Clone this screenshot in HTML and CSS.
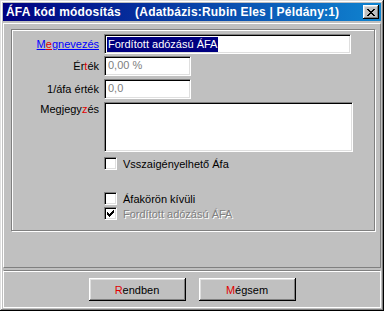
FILE: index.html
```html
<!DOCTYPE html>
<html lang="hu">
<head>
    <meta charset="UTF-8">
    <title>ÁFA kód módosítás</title>
    <link rel="stylesheet" href="styles.css">
</head>
<body>
    <div class="window">
        <div class="titlebar">
            <span class="title">ÁFA kód módosítás    (Adatbázis:Rubin Eles | Példány:1)</span>
            <div class="close-btn">
                <svg width="8" height="7" viewBox="0 0 8 7" shape-rendering="crispEdges"><path d="M0 0h2v1h-2z M6 0h2v1h-2z M1 1h2v1h-2z M5 1h2v1h-2z M2 2h4v1h-4z M3 3h2v1h-2z M2 4h4v1h-4z M1 5h2v1h-2z M5 5h2v1h-2z M0 6h2v1h-2z M6 6h2v1h-2z" fill="#000"/></svg>
            </div>
        </div>
        <div class="main">
            <div class="group">
                <div class="row row-name">
                    <a class="label link">M<u class="key">e</u>gnevezés</a>
                    <div class="field field-wide"><span class="sel">Fordított adózású ÁFA</span></div>
                </div>
                <div class="row row-value">
                    <span class="label">Ér<span class="key">t</span>ék</span>
                    <div class="field field-short"><span class="grey">0,00 %</span></div>
                </div>
                <div class="row row-inverse">
                    <span class="label">1/áfa érték</span>
                    <div class="field field-short"><span class="grey">0,0</span></div>
                </div>
                <div class="row row-note">
                    <span class="label label-top">Megjegy<span class="key">z</span>és</span>
                    <div class="field field-area"></div>
                </div>
                <div class="checks">
                    <label class="check check-first"><span class="box"></span>Vsszaigényelhető Áfa</label>
                    <label class="check check-second"><span class="box"></span>Áfakörön kívüli</label>
                    <label class="check disabled"><span class="box">
                        <svg width="7" height="7" viewBox="0 0 7 7" shape-rendering="crispEdges"><path d="M6 0h1v1h-1z M5 1h2v1h-2z M0 2h1v1h-1z M4 2h3v1h-3z M0 3h2v1h-2z M3 3h3v1h-3z M0 4h5v1h-5z M1 5h3v1h-3z M2 6h1v1h-1z" fill="#000"/></svg>
                    </span>Fordított adózású ÁFA</label>
                </div>
            </div>
        </div>
        <div class="footer">
            <button class="btn"><span class="key">R</span>endben</button>
            <button class="btn"><span class="key">M</span>égsem</button>
        </div>
    </div>
</body>
</html>
```

FILE: styles.css
```css
body {
    margin: 0;
    font-family: "Liberation Sans", Arial, sans-serif;
    font-size: 11px;
    color: #000;
    background: #c0c0c0;
}
.window {
    width: 384px;
    height: 311px;
    box-sizing: border-box;
    padding: 3px;
    background: #c0c0c0;
    box-shadow: inset -1px -1px 0 #000, inset 1px 1px 0 #dfdfdf,
                inset -2px -2px 0 #808080, inset 2px 2px 0 #fff;
    display: flex;
    flex-direction: column;
}
.titlebar {
    height: 18px;
    flex-shrink: 0;
    display: flex;
    align-items: center;
    justify-content: space-between;
    padding: 0 2px 0 3px;
    background: linear-gradient(to right, #000080, #1084d0);
}
.title {
    color: #fff;
    font-family: "Liberation Sans", Arial, sans-serif;
    font-weight: bold;
    font-size: 12px;
    letter-spacing: 0.2px;
    white-space: pre;
}
.close-btn {
    width: 16px;
    height: 14px;
    box-sizing: border-box;
    background: #c0c0c0;
    box-shadow: inset -1px -1px 0 #000, inset 1px 1px 0 #fff,
                inset -2px -2px 0 #808080, inset 2px 2px 0 #dfdfdf;
    display: flex;
    align-items: center;
    justify-content: center;
}
.main {
    margin-top: 2px;
    height: 245px;
    box-sizing: border-box;
    border-top: 1px solid #fff;
    border-left: 1px solid #fff;
    border-right: 1px solid #808080;
    border-bottom: 1px solid #808080;
    padding: 5px 5px 0 7px;
}
.group {
    height: 202px;
    box-sizing: border-box;
    border: 1px solid #808080;
    box-shadow: 1px 1px 0 #fff, inset 1px 1px 0 #fff;
    padding: 4px 0 0 1px;
}
.row {
    display: flex;
    align-items: center;
}
.label {
    width: 86px;
    text-align: right;
    padding-right: 5px;
    flex-shrink: 0;
}
.label-top {
    align-self: flex-start;
    padding-top: 1px;
}
.link {
    color: #0000ff;
    text-decoration: underline;
}
.key {
    color: #e00000;
    text-decoration: inherit;
}
.field {
    height: 20px;
    box-sizing: border-box;
    background: #fff;
    border-top: 1px solid #808080;
    border-left: 1px solid #808080;
    border-right: 1px solid #fff;
    border-bottom: 1px solid #fff;
    box-shadow: inset 1px 1px 0 #000, inset -1px -1px 0 #dfdfdf;
    padding: 2px 0 0 3px;
    white-space: nowrap;
}
.field-wide {
    width: 247px;
    padding-left: 2px;
}
.field-short {
    width: 87px;
}
.field-area {
    width: 249px;
    height: 50px;
}
.row-value {
    margin-top: 2px;
}
.row-inverse {
    margin-top: 3px;
}
.row-note {
    margin-top: 3px;
}
.sel {
    display: inline-block;
    background: #000080;
    color: #fff;
    padding: 1px;
    line-height: 13px;
}
.grey {
    color: #808080;
}
.checks {
    padding-left: 91px;
}
.check {
    display: flex;
    align-items: center;
    height: 13px;
    margin-top: 2px;
}
.check-first {
    margin-top: 5px;
}
.check-second {
    margin-top: 22px;
}
.box {
    width: 13px;
    height: 13px;
    box-sizing: border-box;
    margin-right: 6px;
    background: #fff;
    border-top: 1px solid #808080;
    border-left: 1px solid #808080;
    border-right: 1px solid #fff;
    border-bottom: 1px solid #fff;
    box-shadow: inset 1px 1px 0 #000, inset -1px -1px 0 #dfdfdf;
    display: flex;
    align-items: center;
    justify-content: center;
    text-shadow: none;
}
.disabled {
    color: #808080;
    text-shadow: 1px 1px 0 #fff;
}
.footer {
    margin-top: 2px;
    flex: 1;
    border-top: 1px solid #808080;
    border-left: 1px solid #fff;
    border-right: 1px solid #fff;
    border-bottom: 1px solid #fff;
    box-shadow: inset 0 1px 0 #fff;
    display: flex;
    justify-content: center;
    align-items: flex-start;
    gap: 13px;
    padding-top: 7px;
}
.btn {
    width: 97px;
    height: 23px;
    font-family: "Liberation Sans", Arial, sans-serif;
    font-size: 11px;
    background: #c0c0c0;
    border: none;
    padding: 0;
    box-shadow: inset -1px -1px 0 #000, inset 1px 1px 0 #fff,
                inset -2px -2px 0 #808080, inset 2px 2px 0 #dfdfdf;
}
```
